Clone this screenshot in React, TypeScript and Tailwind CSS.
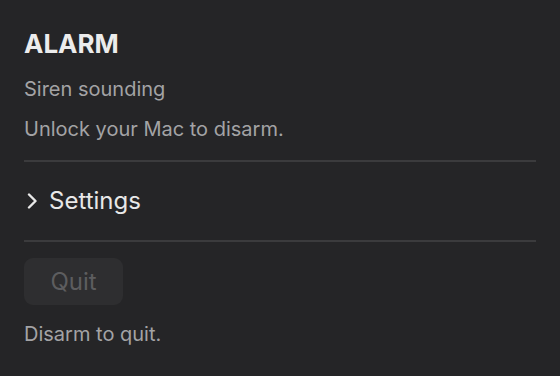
export default function App() {
  return (
    <div
      className="w-[560px] h-[376px] bg-[#252527] px-6 pt-[29px] overflow-hidden"
      style={{ fontFamily: "Inter, 'Noto Sans', sans-serif" }}
    >
      <h1 className="text-[26px] leading-[30px] font-bold text-[#ececec]">ALARM</h1>
      <p className="mt-[18px] text-[20px] leading-[24px] text-[#a3a3a5]">Siren sounding</p>
      <p className="mt-[16px] text-[20px] leading-[24px] text-[#a3a3a5]">
        Unlock your Mac to disarm.
      </p>

      <div className="mt-[19px] h-[2px] bg-[#3b3b3d]" />

      <button type="button" className="flex items-center gap-[11px] py-[24px] text-[#e8e8e8]">
        <svg
          viewBox="0 0 12 16"
          className="ml-[2px] w-[12px] h-[16px]"
          fill="none"
          stroke="currentColor"
          strokeWidth={2.4}
          strokeLinecap="round"
          strokeLinejoin="round"
        >
          <path d="M3 1.5 L9.5 8 L3 14.5" />
        </svg>
        <span className="text-[24px] leading-[30px]">Settings</span>
      </button>

      <div className="h-[2px] bg-[#3b3b3d]" />

      <button
        type="button"
        disabled
        className="block mt-[16px] w-[99px] h-[47px] rounded-[9px] bg-[#2e2e30] text-[24px] text-[#5d5d5f]"
      >
        Quit
      </button>

      <p className="mt-[17px] text-[20px] leading-[24px] text-[#a3a3a5]">Disarm to quit.</p>
    </div>
  );
}
